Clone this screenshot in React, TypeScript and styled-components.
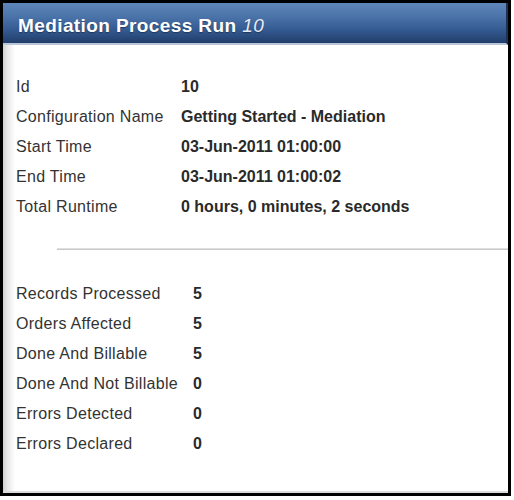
import React from "react";
import styled, { createGlobalStyle } from "styled-components";

const GlobalStyle = createGlobalStyle`
  html, body {
    margin: 0;
    padding: 0;
    background: #fff;
  }
  body {
    font-family: "Liberation Sans", Arial, sans-serif;
  }
`;

type Field = { label: string; value: string };

const runInfo: Field[] = [
  { label: "Id", value: "10" },
  { label: "Configuration Name", value: "Getting Started - Mediation" },
  { label: "Start Time", value: "03-Jun-2011 01:00:00" },
  { label: "End Time", value: "03-Jun-2011 01:00:02" },
  { label: "Total Runtime", value: "0 hours, 0 minutes, 2 seconds" },
];

const stats: Field[] = [
  { label: "Records Processed", value: "5" },
  { label: "Orders Affected", value: "5" },
  { label: "Done And Billable", value: "5" },
  { label: "Done And Not Billable", value: "0" },
  { label: "Errors Detected", value: "0" },
  { label: "Errors Declared", value: "0" },
];

const App = () => {
  return (
    <>
      <GlobalStyle />
      <Frame>
        <Header>
          <Title>
            Mediation Process Run <RunId>10</RunId>
          </Title>
        </Header>
        <Body>
          <FieldList $labelWidth={165}>
            {runInfo.map((f) => (
              <React.Fragment key={f.label}>
                <Label>{f.label}</Label>
                <Value>{f.value}</Value>
              </React.Fragment>
            ))}
          </FieldList>
          <Divider />
          <FieldList $labelWidth={177}>
            {stats.map((f) => (
              <React.Fragment key={f.label}>
                <Label>{f.label}</Label>
                <Value>{f.value}</Value>
              </React.Fragment>
            ))}
          </FieldList>
        </Body>
      </Frame>
    </>
  );
};

export default App;

const Frame = styled.div`
  width: 511px;
  height: 496px;
  box-sizing: border-box;
  border: 3px solid #000;
  display: flex;
  flex-direction: column;
  background: #fff;
`;

const Header = styled.div`
  height: 42px;
  box-sizing: border-box;
  flex: none;
  display: flex;
  align-items: center;
  padding: 6px 0 0 15px;
  background: linear-gradient(
    to bottom,
    #5f86b9 0%,
    #4a73a9 35%,
    #355c93 65%,
    #213d6b 100%
  );
  border-right: 2px solid #1c3257;
  border-bottom: 2px solid #b9c6d8;
`;

const Title = styled.h1`
  margin: 0;
  font-size: 19px;
  font-weight: bold;
  color: #fff;
  letter-spacing: 0.4px;
  text-shadow: 0 1px 1px rgba(0, 0, 0, 0.35);
`;

const RunId = styled.span`
  font-weight: normal;
  font-style: italic;
  color: #e6ecf5;
`;

const Body = styled.div`
  flex: 1;
  padding: 27px 0 0 13px;
  background: linear-gradient(
    to right,
    #d0d0d0 0px,
    #e6e6e6 4px,
    #fff 12px
  );
  border-bottom: 2px solid #dcdcdc;
`;

const FieldList = styled.div<{ $labelWidth: number }>`
  display: grid;
  grid-template-columns: ${({ $labelWidth }) => $labelWidth}px 1fr;
  grid-auto-rows: 30px;
  align-items: center;
  font-size: 16px;
  color: #333;
`;

const Label = styled.div`
  white-space: nowrap;
  letter-spacing: 0.3px;
`;

const Value = styled.div`
  font-weight: bold;
  color: #2a2a2a;
  white-space: nowrap;
`;

const Divider = styled.div`
  height: 2px;
  margin: 26px 0 29px 41px;
  background: #c8c8c8;
  border-top: 1px solid #e0e0e0;
  box-sizing: border-box;
`;
